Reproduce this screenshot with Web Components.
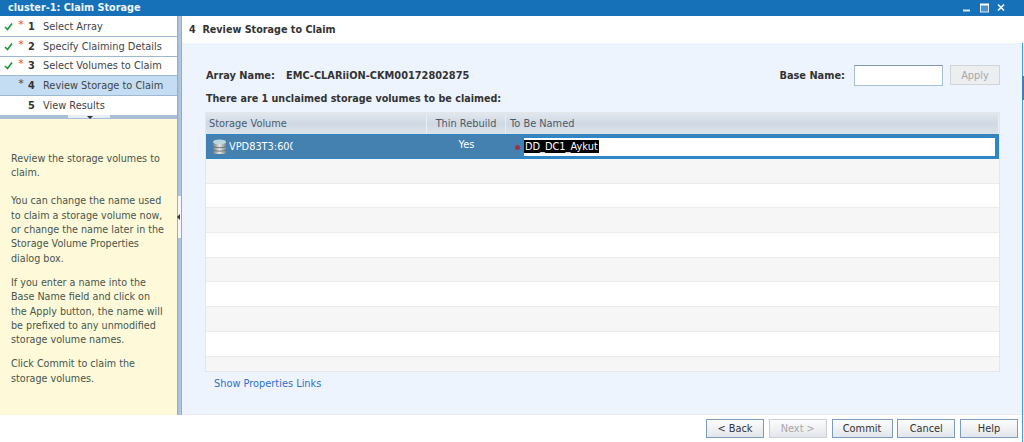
<!DOCTYPE html>
<html><head><meta charset="utf-8">
<style>
html,body{margin:0;padding:0;background:#fff}
body{width:1024px;height:442px;overflow:hidden;font:9.8px "DejaVu Sans",sans-serif;color:#333}
</style></head><body>
<template id="t-dialog"><style>
:host{display:grid;grid-template-rows:16px 1fr 27px;width:1024px;height:442px;position:relative}
.main{display:grid;grid-template-columns:177px 5px 1fr;min-height:0}
.split{background:linear-gradient(90deg,#8fa6c2 0,#a9c0dc 30%,#b4c8e0 70%,#7f9cbd 100%);position:relative}
.split i{position:absolute;left:1px;top:180px;width:3px;height:42px;background:#f4f7fb}
.split b{position:absolute;left:0;top:198px;border:3px solid transparent;border-left:0;border-right:3px solid #334}
.side{display:flex;flex-direction:column;min-height:0}
.right{display:flex;flex-direction:column;min-width:0;min-height:0}
.edge{position:absolute;left:1022px;top:43px;bottom:0;width:1px;background:#4a9bd8}
.edge::after{content:"";position:absolute;left:0;top:33px;width:2px;height:24px;background:#3f83b8}
</style>
<slot name="title"></slot>
<div class="main"><div class="side"><slot name="side"></slot></div><div class="split"><i></i><b></b></div><div class="right"><slot></slot></div></div>
<slot name="footer"></slot><div class="edge"></div></template>

<template id="t-title"><style>
:host{display:flex;align-items:center;background:#1771b9;color:#eef5fb;font:bold 9.7px "DejaVu Sans",sans-serif;padding-left:8px;height:16px;position:relative}
span{flex:1;line-height:16px}
svg{display:block;margin-right:9px}
</style><span><slot></slot></span>
<svg width="60" height="16" viewBox="0 0 60 16"><path d="M8 10.500h7" stroke="#dbe9f5" stroke-width="2"/><rect x="25.500" y="4.500" width="8" height="7.500" fill="#4d94cc" stroke="#dbe9f5"/><path d="M25 4.500h9" stroke="#fff" stroke-width="2"/><path d="M43 4.500l6 6M49 4.500l-6 6" stroke="#eef5fb" stroke-width="1.700"/></svg></template>

<template id="t-steps"><style>
:host{display:flex;flex-direction:column;height:103px;flex:none;padding-top:1.500px;box-sizing:border-box;background:#fff}
.grip{height:4px;background:#a9bfd6;position:relative;flex:none;margin-top:auto}
.grip i{position:absolute;left:68px;top:0;width:42px;height:3px;background:#e6edf5}
.grip b{position:absolute;left:87px;top:1px;border:3px solid transparent;border-top:3px solid #334;border-bottom:0}
</style><slot></slot><div class="grip"><i></i><b></b></div></template>

<template id="t-step"><style>
:host{display:flex;align-items:center;height:18.600px;border-bottom:1px solid #9fb7d0;background:#fff;color:#444;box-sizing:content-box;flex:none}
:host([current]){background:#c5ddf2}
:host([last]){border-bottom:0}
.chk{width:16px;flex:none;padding-left:4px;box-sizing:border-box;display:flex}
.star{width:10px;flex:none;font-size:11px;color:#e8474c;line-height:10px;margin-top:-3px;text-align:center}
:host([current]) .star{color:#445}
.num{width:11px;flex:none;font-weight:bold;color:#333;text-align:center;margin-right:6px}
.label{white-space:nowrap}
</style><span class="chk"></span><span class="star"></span><span class="num"></span><span class="label"><slot></slot></span></template>

<template id="t-help"><style>
:host{display:block;flex:1;background:#fef9d8;color:#46564f;padding:33px 4px 0 11px;line-height:14.400px;min-height:0;white-space:nowrap;font-size:9.600px}
::slotted(p){margin:0 0 9.600px}
::slotted(p:first-child){margin-bottom:13.400px}
</style><slot></slot></template>

<template id="t-head"><style>
:host{display:block;height:27px;line-height:28px;flex:none;background:#fff;font-weight:bold;font-size:9.650px;color:#333;padding-left:7px;white-space:pre}
</style><slot></slot></template>

<template id="t-body"><style>
:host{display:flex;flex-direction:column;flex:1;min-height:0;background:#eef4fd;padding:20px 24px 0 23px;border-bottom:1px solid #e8ecf2}
</style><slot></slot></template>

<template id="t-form"><style>
:host{display:flex;align-items:center;height:24px;font-weight:bold;color:#333;padding-left:1px}
.a{width:80px;flex:none}
.sp{flex:1}
.inp{width:87px;height:19px;background:#fff;border:1px solid #a7bfd9;border-top-color:#8299b0;margin:0 7px 0 9px;flex:none}
</style><span class="a">Array Name:</span><span class="n"></span><span class="sp"></span><span>Base Name:</span><span class="inp"></span><ui-btn small disabled>Apply</ui-btn></template>

<template id="t-btn"><style>
:host{display:flex;align-items:center;justify-content:center;width:56px;height:17px;box-sizing:content-box;background:linear-gradient(#fbfcfd,#e3e6ea);border:1px solid #7d9cbd;color:#333;font:9.800px "DejaVu Sans",sans-serif;flex:none}
:host([disabled]){color:#a6a8ab;border-color:#c9ced3}
:host([wide]){width:59px}
:host([small]){width:48px;height:18px;background:#eceef0;border-color:#d2d5d8}
</style><slot></slot></template>

<template id="t-table"><style>
:host{display:block;border:1px solid #e4e7ea;border-top:0;background:#fff;height:259px;overflow:hidden;flex:none}
.h{display:grid;grid-template-columns:221px 79px 1fr;height:22px;background:linear-gradient(#e2e7ee,#cfd9e4 50%,#dde3ea);color:#4b5a68;line-height:21px;border-top:1px solid #e4e7ea;box-sizing:border-box}
.h span{padding-left:3px;border-right:1px solid #e9edf1}
.h span:nth-child(2){text-align:center;padding:0}
.h span:nth-child(3){padding-left:4px}
</style><div class="h"><span>Storage Volume</span><span>Thin Rebuild</span><span>To Be Named</span></div><slot></slot></template>

<template id="t-selrow"><style>
:host{display:grid;grid-template-columns:221px 79px 1fr;height:25px;background:#4480b0;border-top:1px solid #2f86c6;border-bottom:1px solid #2f86c6;box-sizing:border-box;color:#fff;position:relative}
.c1{display:flex;align-items:center;padding-left:6px;gap:2px;overflow:hidden}
.c1 span{display:block;width:64px;overflow:hidden;white-space:nowrap}
.c2{text-align:center;line-height:20px}
.c3{display:flex;align-items:center;padding-left:9px}
.dot{width:5px;height:5px;border-radius:50%;background:#a33040;margin-right:2px;flex:none;margin-top:1px}
.ed{flex:1;height:18px;background:#fff;border:2px solid #2f86c6;border-right-width:4px;display:flex;align-items:center;padding-left:0}
.ed mark{background:#000;color:#fff;line-height:13px;padding:0 1px}
</style><div class="c1"><svg width="15" height="17" viewBox="0 0 15 17" style="flex:none"><defs><linearGradient id="g" x1="0" x2="1"><stop offset="0" stop-color="#777d81"/><stop offset=".5" stop-color="#e4e6e6"/><stop offset="1" stop-color="#83888b"/></linearGradient></defs><rect x="1" y="2" width="13" height="14" rx="2" fill="url(#g)"/><ellipse cx="7.500" cy="4" rx="6.500" ry="2.500" fill="#bcd8dc"/><path d="M1 8.500c2 1.500 11 1.500 13 0M1 12c2 1.500 11 1.500 13 0" stroke="#6b7174" fill="none"/></svg><span>VPD83T3:60000</span></div><div class="c2">Yes</div><div class="c3"><i class="dot"></i><div class="ed"><mark>DD_DC1_Aykut</mark></div></div></template>

<template id="t-row"><style>
:host{display:block;height:24.700px;box-sizing:border-box;border-bottom:1px solid #ebebeb;background:#fff}
:host([alt]){background:#f6f6f6}
</style></template>

<template id="t-link"><style>
:host{display:block;color:#2f70c9;margin:5px 0 0 9px;line-height:13px}
</style><slot></slot></template>

<template id="t-footer"><style>
:host{display:flex;justify-content:flex-end;align-items:center;gap:4.750px;height:27px;background:#fff;padding-right:6px;box-sizing:border-box}
</style><slot></slot></template>

<ui-dialog>
  <ui-title slot="title">cluster-1: Claim Storage</ui-title>
  <ui-steps slot="side">
    <ui-step done req n="1">Select Array</ui-step>
    <ui-step done req n="2">Specify Claiming Details</ui-step>
    <ui-step done req n="3">Select Volumes to Claim</ui-step>
    <ui-step current req n="4">Review Storage to Claim</ui-step>
    <ui-step last n="5">View Results</ui-step>
  </ui-steps>
  <ui-help slot="side">
    <p>Review the storage volumes to<br>claim.</p>
    <p>You can change the name used<br>to claim a storage volume now,<br>or change the name later in the<br>Storage Volume Properties<br>dialog box.</p>
    <p>If you enter a name into the<br>Base Name field and click on<br>the Apply button, the name will<br>be prefixed to any unmodified<br>storage volume names.</p>
    <p>Click Commit to claim the<br>storage volumes.</p>
  </ui-help>
  <ui-head>4  Review Storage to Claim</ui-head>
  <ui-body>
    <ui-form value="EMC-CLARiiON-CKM00172802875"></ui-form>
    <div style="font-weight:bold;font-size:9.600px;color:#333;line-height:14px;margin:5px 0 6px 1px">There are 1 unclaimed storage volumes to be claimed:</div>
    <ui-table>
      <ui-selrow></ui-selrow>
      <ui-row alt></ui-row><ui-row></ui-row><ui-row alt></ui-row><ui-row></ui-row><ui-row alt></ui-row><ui-row></ui-row><ui-row alt></ui-row><ui-row></ui-row><ui-row alt></ui-row>
    </ui-table>
    <ui-link>Show Properties Links</ui-link>
  </ui-body>
  <ui-footer slot="footer">
    <ui-btn>&lt; Back</ui-btn><ui-btn disabled>Next &gt;</ui-btn><ui-btn wide>Commit</ui-btn><ui-btn>Cancel</ui-btn><ui-btn>Help</ui-btn>
  </ui-footer>
</ui-dialog>
<script>
function def(name,tid,init){
  customElements.define(name,class extends HTMLElement{
    constructor(){super();const r=this.attachShadow({mode:'open'});r.appendChild(document.getElementById(tid).content.cloneNode(true));}
    connectedCallback(){if(init)init(this,this.shadowRoot);}
  });
}
def('ui-btn','t-btn');
def('ui-dialog','t-dialog');
def('ui-title','t-title');
def('ui-steps','t-steps');
def('ui-step','t-step',(h,r)=>{
  r.querySelector('.num').textContent=h.getAttribute('n');
  if(h.hasAttribute('req'))r.querySelector('.star').textContent='*';
  if(h.hasAttribute('done'))r.querySelector('.chk').innerHTML='<svg width="9" height="9" viewBox="0 0 9 9"><path d="M1 5l2.500 2.500L8 1.500" fill="none" stroke="#1f9a3c" stroke-width="1.700"/></svg>';
});
def('ui-help','t-help');
def('ui-head','t-head');
def('ui-body','t-body');
def('ui-form','t-form',(h,r)=>{r.querySelector('.n').textContent=h.getAttribute('value');});
def('ui-table','t-table');
def('ui-selrow','t-selrow');
def('ui-row','t-row');
def('ui-link','t-link');
def('ui-footer','t-footer');
</script>
</body></html>
